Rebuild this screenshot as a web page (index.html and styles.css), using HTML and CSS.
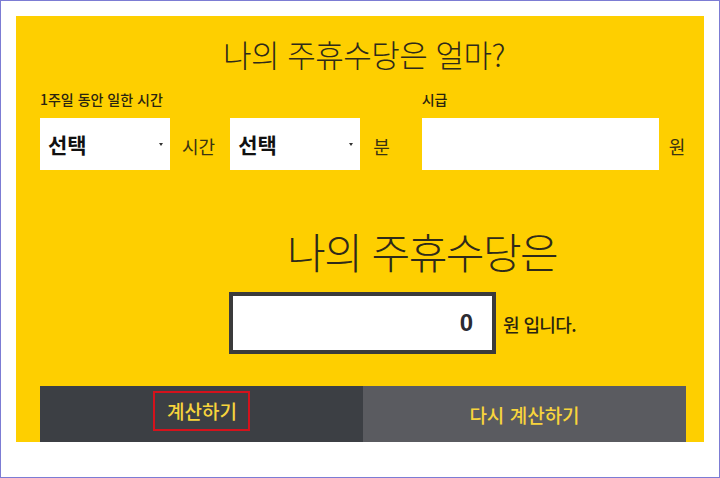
FILE: index.html
```html
<!DOCTYPE html>
<html lang="ko">
<head>
  <meta charset="UTF-8">
  <meta name="viewport" content="width=device-width, initial-scale=1.0">
  <title>주휴수당 계산기</title>
  <link rel="stylesheet" href="styles.css">
</head>
<body>
  <div class="frame">
    <section class="calc">
      <h1 class="calc-title">나의 주휴수당은 얼마?</h1>

      <div class="form-row">
        <div class="field">
          <label class="field-label">1주일 동안 일한 시간</label>
          <div class="field-line">
            <div class="select-box">
              <select><option>선택</option></select>
            </div>
            <span class="unit unit-hour">시간</span>
          </div>
        </div>
        <div class="field">
          <label class="field-label">&nbsp;</label>
          <div class="field-line">
            <div class="select-box">
              <select><option>선택</option></select>
            </div>
            <span class="unit unit-min">분</span>
          </div>
        </div>
        <div class="field">
          <label class="field-label">시급</label>
          <div class="field-line">
            <input class="wage-input" type="text">
            <span class="unit unit-won">원</span>
          </div>
        </div>
      </div>

      <h2 class="result-title">나의 주휴수당은</h2>
      <div class="result-row">
        <div class="result-box">0</div>
        <span class="result-unit">원 입니다.</span>
      </div>

      <div class="btn-row">
        <button class="btn btn-calc"><span class="mark">계산하기</span></button>
        <button class="btn btn-reset">다시 계산하기</button>
      </div>
    </section>
  </div>
</body>
</html>
```

FILE: styles.css
```css
* { box-sizing: border-box; }
body { margin: 0; background: #fff; font-family: "Noto Sans CJK KR", "Noto Sans", sans-serif; color: #222; }
.frame { width: 720px; height: 478px; border: 1px solid #7c7cd4; padding: 15px 15px 0 15px; }

.calc { background: #fecf00; width: 688px; height: 426px; padding: 20px 18px 0 24px; }
.calc-title { margin: 0; text-align: center; font-size: 31px; font-weight: 300; line-height: 36px; color: #2e2a1a; letter-spacing: -0.5px; padding-left: 2px; }

.form-row { display: flex; margin-top: 17px; }
.field { display: flex; flex-direction: column; flex: none; }
.field-label { font-size: 14px; font-weight: 500; line-height: 20px; height: 20px; margin-bottom: 7px; color: #2a2410; letter-spacing: 0; white-space: nowrap; }
.field-line { display: flex; align-items: center; }

.select-box { position: relative; flex: none; width: 130px; height: 52px; background: #fff; }
.select-box select { appearance: none; -webkit-appearance: none; border: none; background: transparent; width: 100%; height: 100%; padding: 0 8px; font-family: inherit; font-size: 21px; font-weight: 700; color: #111; outline: none; }
.select-box::after { content: ""; position: absolute; right: 7px; top: 25px; border-left: 2px solid transparent; border-right: 2px solid transparent; border-top: 3px solid #333; }

.unit { flex: none; white-space: nowrap; font-size: 18px; color: #3a3312; line-height: 52px; }
.unit-hour { margin: 4px 15px 0 12px; }
.unit-min { margin: 4px 32px 0 13px; }
.unit-won { margin: 4px 0 0 10px; }

.wage-input { flex: none; width: 237px; height: 52px; border: none; background: #fff; outline: none; }

.result-title { margin: 53px 0 0 247px; font-size: 42px; font-weight: 300; line-height: 52px; color: #2e2a1a; letter-spacing: -1.5px; }
.result-row { display: flex; align-items: center; margin: 15px 0 0 189px; }
.result-box { width: 267px; height: 62px; border: 4px solid #3b3b3b; background: #fff; text-align: right; padding-right: 19px; font-family: "Liberation Sans", Arial, sans-serif; font-size: 24px; font-weight: 700; line-height: 54px; color: #2b2b33; }
.result-unit { margin-left: 7px; margin-top: 2px; font-size: 18px; font-weight: 500; color: #2a2410; letter-spacing: -0.6px; }

.btn-row { display: flex; margin-top: 32px; }
.btn { flex: 1; height: 56px; border: none; font-family: inherit; font-size: 19px; font-weight: 500; color: #f7d43c; cursor: pointer; padding: 0; }
.btn-calc { background: #3c3f44; }
.btn-reset { background: #5a5b60; }
.mark { display: inline-block; border: 2.5px solid #d4121c; padding: 3px 11px 3px 12px; line-height: 30px; margin-top: -6px; }
```
